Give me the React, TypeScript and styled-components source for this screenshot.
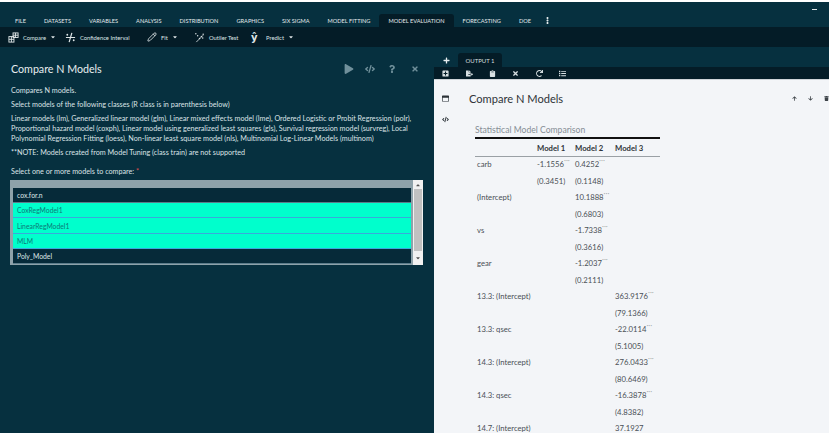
import React from 'react';
import styled, { createGlobalStyle } from 'styled-components';
import { FaPlay, FaCode, FaQuestion, FaTimes, FaPlus, FaFileExport, FaClipboard, FaRedo, FaList, FaEllipsisV, FaArrowUp, FaArrowDown, FaRegWindowMaximize, FaCaretDown, FaCaretUp, FaPlusSquare, FaTrash } from 'react-icons/fa';
import { Pencil } from 'lucide-react';

const GlobalStyle = createGlobalStyle`
  html, body {
    margin: 0;
    padding: 0;
    background: #ffffff;
    font-family: "Lato", "Open Sans", sans-serif;
  }
`;

const Page = styled.div`
  width: 829px;
  height: 435px;
  display: flex;
  flex-direction: column;
  overflow: hidden;
  background: #06303f;
  border-top: 2px solid #ffffff;
  border-bottom: 2px solid #ffffff;
  box-sizing: border-box;
`;

const TabBar = styled.div`
  height: 25px;
  flex: none;
  display: flex;
  align-items: flex-end;
  padding-left: 6px;
  position: relative;
`;

const Tab = styled.div<{ $active?: boolean }>`
  height: 13px;
  line-height: 13px;
  padding: 0 9px;
  font-size: 5.65px;
  color: #e3eaec;
  background: ${props => (props.$active ? '#041c27' : 'transparent')};
  border-radius: 3px 3px 0 0;
  white-space: nowrap;
`;

const MoreTab = styled.div`
  color: #e3eaec;
  font-size: 7px;
  height: 13px;
  display: flex;
  align-items: center;
  margin-left: 4px;
`;

const Minimize = styled.div`
  position: absolute;
  right: 12px;
  top: 7px;
  width: 5px;
  height: 1px;
  background: #dfe6e8;
`;

const Toolbar = styled.div`
  height: 20px;
  flex: none;
  display: flex;
  align-items: center;
  background: #041c27;
  color: #dfe6e8;
  padding-left: 8px;
`;

const ToolItem = styled.div<{ $width: number }>`
  width: ${props => props.$width}px;
  flex: none;
  display: flex;
  align-items: center;
  gap: 4px;
  font-size: 5.8px;
  white-space: nowrap;
  svg {
    flex: none;
  }
`;

const HatGlyph = styled.span`
  font-size: 10px;
  font-weight: 700;
  line-height: 11px;
  width: 8px;
  margin-right: 3px;
  font-family: "DejaVu Sans", sans-serif;
`;

const Main = styled.div`
  flex: 1;
  min-height: 0;
  display: flex;
`;

const LeftPanel = styled.div`
  width: 434px;
  flex: none;
  padding: 14px 10px 0 11px;
  box-sizing: border-box;
  color: #dbe3e6;
  font-size: 7.2px;
  line-height: 10px;
`;

const PanelHeader = styled.div`
  height: 16px;
  display: flex;
  align-items: center;
  justify-content: space-between;
  margin-bottom: 9px;
`;

const PanelTitle = styled.h1`
  margin: 0;
  font-size: 10.7px;
  font-weight: 400;
  color: #e6edef;
`;

const PanelActions = styled.div`
  display: flex;
  align-items: center;
  gap: 11px;
  margin-right: 5px;
  color: #70909b;
  font-size: 10px;
`;

const HelpIcon = styled(FaQuestion)`
  font-size: 8px;
  margin: 0 2px;
`;

const CloseIcon = styled(FaTimes)`
  font-size: 8px;
  margin-left: 2px;
`;

const Para = styled.p<{ $gap?: number }>`
  margin: 0 0 ${props => props.$gap ?? 4}px;
`;

const Required = styled.span`
  color: #e05050;
`;

const ListBox = styled.div`
  width: 413px;
  height: 85px;
  margin-left: -1px;
  display: flex;
  background: #8ea2aa;
  box-sizing: border-box;
`;

const Rows = styled.div`
  flex: 1;
  padding: 8px 2px 1px 3px;
  display: flex;
  flex-direction: column;
`;

const Row = styled.div<{ $selected?: boolean }>`
  flex: 1;
  display: flex;
  align-items: center;
  padding-left: 4px;
  font-size: 6.8px;
  color: ${props => (props.$selected ? '#0e7a78' : '#dfe6e8')};
  background: ${props => (props.$selected ? '#00ffcc' : '#062a39')};
  border-bottom: 1px solid ${props => (props.$selected ? '#39a9dc' : '#5b7c8a')};
`;

const ScrollBar = styled.div`
  width: 10px;
  flex: none;
  display: flex;
  flex-direction: column;
  align-items: center;
  justify-content: space-between;
  background: #f1f1f1;
  color: #505050;
  font-size: 6px;
`;

const ScrollThumb = styled.div`
  flex: 1;
  width: 8px;
  background: #c1c1c1;
`;

const ScrollArrow = styled.div<{ $height: number }>`
  height: ${props => props.$height}px;
  flex: none;
  display: flex;
  align-items: center;
`;

const RightPanel = styled.div`
  flex: 1;
  min-width: 0;
  display: flex;
  flex-direction: column;
`;

const OutputTabs = styled.div`
  height: 14px;
  margin-top: 6px;
  flex: none;
  display: flex;
  align-items: stretch;
  color: #e8eef0;
`;

const AddTab = styled.div`
  width: 24px;
  display: flex;
  align-items: center;
  justify-content: center;
  font-size: 7px;
`;

const OutputTab = styled.div`
  width: 44px;
  background: #041c27;
  border-radius: 3px 3px 0 0;
  font-size: 6px;
  display: flex;
  align-items: center;
  justify-content: center;
  color: #d3dcdf;
`;

const OutputToolbar = styled.div`
  height: 12px;
  flex: none;
  background: #041c27;
  color: #d8e0e3;
  display: flex;
  align-items: center;
  font-size: 7px;
`;

const OutputTool = styled.div`
  width: 23.4px;
  flex: none;
  display: flex;
  align-items: center;
  justify-content: center;
`;

const OutputBody = styled.div`
  flex: 1;
  min-height: 0;
  display: flex;
  background: #f3f5f8;
  overflow: hidden;
  border-top: 1px solid #cfd4d8;
`;

const SideRail = styled.div`
  width: 35px;
  flex: none;
  padding: 15px 0 0 8px;
  display: flex;
  flex-direction: column;
  align-items: flex-start;
  gap: 14px;
  color: #2c3338;
  font-size: 7px;
  box-sizing: border-box;
`;

const OutputContent = styled.div`
  flex: 1;
  min-width: 0;
`;

const OutputHeader = styled.div`
  height: 18px;
  margin-top: 9px;
  display: flex;
  align-items: center;
  justify-content: space-between;
`;

const OutputTitle = styled.h2`
  margin: 0;
  font-size: 11.1px;
  font-weight: 400;
  color: #2f3438;
`;

const OutputActions = styled.div`
  display: flex;
  gap: 11px;
  font-size: 5px;
  color: #3c4247;
  width: 37px;
  flex: none;
`;

const ModelTable = styled.table`
  margin: 17px 0 0 6px;
  width: 185px;
  border-collapse: collapse;
  table-layout: fixed;
  font-size: 7.7px;
  color: #4a5056;
  caption-side: top;
`;

const Caption = styled.caption`
  text-align: left;
  font-size: 8.6px;
  color: #868e96;
  height: 13px;
  line-height: 12px;
  padding: 0;
`;

const HeadCell = styled.th`
  height: 17px;
  padding: 0 0 0 2px;
  text-align: left;
  font-weight: 700;
  color: #2f3438;
  border-top: 2px solid #111111;
  border-bottom: 1px solid #9aa0a5;
`;

const Cell = styled.td`
  height: 16.5px;
  box-sizing: border-box;
  padding: 0 0 1.5px 2px;
  white-space: nowrap;
`;

const Stars = styled.sup`
  font-size: 4.5px;
  line-height: 0;
`;

const CompareIcon = () => (
  <svg width="11" height="11" viewBox="0 0 12 12" fill="none" stroke="currentColor" strokeWidth="1">
    <rect x="5.5" y="1" width="5.5" height="5" />
    <rect x="1" y="5" width="5.5" height="6" />
    <path d="M5.5 3.5h5.500M8.200 1v5M1 8h5.500M3.700 5v6" />
  </svg>
);

const IntervalIcon = () => (
  <svg width="11" height="11" viewBox="0 0 12 12" fill="none" stroke="currentColor" strokeWidth="1.300">
    <path d="M7.500 1 4.500 11M1 6h10" />
    <circle cx="2.500" cy="3" r="1" fill="currentColor" stroke="none" />
    <circle cx="9.500" cy="9" r="1" fill="currentColor" stroke="none" />
  </svg>
);

const OutlierIcon = () => (
  <svg width="11" height="11" viewBox="0 0 12 12" fill="currentColor">
    <circle cx="2" cy="2" r="0.8" />
    <circle cx="4" cy="4" r="0.8" />
    <circle cx="10" cy="2.500" r="0.8" />
    <circle cx="8" cy="5" r="0.8" />
    <circle cx="6" cy="7" r="0.8" />
    <circle cx="9.500" cy="6.500" r="0.8" />
    <path d="M2.500 11 10 3.500" stroke="currentColor" strokeWidth="0.9" fill="none" />
  </svg>
);

const tabs = ['FILE', 'DATASETS', 'VARIABLES', 'ANALYSIS', 'DISTRIBUTION', 'GRAPHICS', 'SIX SIGMA', 'MODEL FITTING', 'MODEL EVALUATION', 'FORECASTING', 'DOE'];

const models = [
  { name: 'cox.for.n' },
  { name: 'CoxRegModel1', selected: true },
  { name: 'LinearRegModel1', selected: true },
  { name: 'MLM', selected: true },
  { name: 'Poly_Model' },
];

type Coef = { label?: string; m1?: string; m2?: string; m3?: string; stars?: boolean };

const rows: Coef[] = [
  { label: 'carb', m1: '-1.1556', m2: '0.4252', stars: true },
  { m1: '(0.3451)', m2: '(0.1148)' },
  { label: '(Intercept)', m2: '10.1888', stars: true },
  { m2: '(0.6803)' },
  { label: 'vs', m2: '-1.7338', stars: true },
  { m2: '(0.3616)' },
  { label: 'gear', m2: '-1.2037', stars: true },
  { m2: '(0.2111)' },
  { label: '13.3: (Intercept)', m3: '363.9176', stars: true },
  { m3: '(79.1366)' },
  { label: '13.3: qsec', m3: '-22.0114', stars: true },
  { m3: '(5.1005)' },
  { label: '14.3: (Intercept)', m3: '276.0433', stars: true },
  { m3: '(80.6469)' },
  { label: '14.3: qsec', m3: '-16.3878', stars: true },
  { m3: '(4.8382)' },
  { label: '14.7: (Intercept)', m3: '37.1927' },
];

const Value = ({ text, stars }: { text?: string; stars?: boolean }) => (
  <Cell>
    {text}
    {text && stars ? <Stars>***</Stars> : null}
  </Cell>
);

const App = () => {
  return <Page>
    <GlobalStyle />
    <TabBar>
      {tabs.map(tab => <Tab key={tab} $active={tab === 'MODEL EVALUATION'}>{tab}</Tab>)}
      <MoreTab><FaEllipsisV /></MoreTab>
      <Minimize />
    </TabBar>
    <Toolbar>
      <ToolItem $width={57}><CompareIcon />Compare <FaCaretDown size={6} /></ToolItem>
      <ToolItem $width={82}><IntervalIcon />Confidence Interval</ToolItem>
      <ToolItem $width={47}><Pencil size={10} />Fit <FaCaretDown size={6} /></ToolItem>
      <ToolItem $width={57}><OutlierIcon />Outlier Test</ToolItem>
      <ToolItem $width={50}><HatGlyph>ŷ</HatGlyph>Predict <FaCaretDown size={6} /></ToolItem>
    </Toolbar>
    <Main>
      <LeftPanel>
        <PanelHeader>
          <PanelTitle>Compare N Models</PanelTitle>
          <PanelActions><FaPlay /><FaCode /><HelpIcon /><CloseIcon /></PanelActions>
        </PanelHeader>
        <Para>Compares N models.</Para>
        <Para>Select models of the following classes (R class is in parenthesis below)</Para>
        <Para>Linear models (lm), Generalized linear model (glm), Linear mixed effects model (lme), Ordered Logistic or Probit Regression (polr), Proportional hazard model (coxph), Linear model using generalized least squares (gls), Survival regression model (survreg), Local Polynomial Regression Fitting (loess), Non-linear least square model (nls), Multinomial Log-Linear Models (multinom)</Para>
        <Para $gap={8.5}>**NOTE: Models created from Model Tuning (class train) are not supported</Para>
        <Para $gap={3.5}>Select one or more models to compare: <Required>*</Required></Para>
        <ListBox>
          <Rows>
            {models.map(model => <Row key={model.name} $selected={model.selected}>{model.name}</Row>)}
          </Rows>
          <ScrollBar>
            <ScrollArrow $height={9}><FaCaretUp /></ScrollArrow>
            <ScrollThumb />
            <ScrollArrow $height={14}><FaCaretDown /></ScrollArrow>
          </ScrollBar>
        </ListBox>
      </LeftPanel>
      <RightPanel>
        <OutputTabs>
          <AddTab><FaPlus /></AddTab>
          <OutputTab>OUTPUT 1</OutputTab>
        </OutputTabs>
        <OutputToolbar>
          <OutputTool><FaPlusSquare /></OutputTool>
          <OutputTool><FaFileExport /></OutputTool>
          <OutputTool><FaClipboard /></OutputTool>
          <OutputTool><FaTimes /></OutputTool>
          <OutputTool><FaRedo /></OutputTool>
          <OutputTool><FaList /></OutputTool>
        </OutputToolbar>
        <OutputBody>
          <SideRail>
            <FaRegWindowMaximize />
            <FaCode />
          </SideRail>
          <OutputContent>
            <OutputHeader>
              <OutputTitle>Compare N Models</OutputTitle>
              <OutputActions><FaArrowUp /><FaArrowDown /><FaTrash /></OutputActions>
            </OutputHeader>
            <ModelTable>
              <Caption>Statistical Model Comparison</Caption>
              <colgroup>
                <col style={{ width: 60 }} />
                <col style={{ width: 38 }} />
                <col style={{ width: 40 }} />
                <col />
              </colgroup>
              <thead>
                <tr>
                  <HeadCell />
                  <HeadCell>Model 1</HeadCell>
                  <HeadCell>Model 2</HeadCell>
                  <HeadCell>Model 3</HeadCell>
                </tr>
              </thead>
              <tbody>
                {rows.map((row, i) => <tr key={i}>
                  <Cell>{row.label}</Cell>
                  <Value text={row.m1} stars={row.stars} />
                  <Value text={row.m2} stars={row.stars} />
                  <Value text={row.m3} stars={row.stars} />
                </tr>)}
              </tbody>
            </ModelTable>
          </OutputContent>
        </OutputBody>
      </RightPanel>
    </Main>
  </Page>;
};

export default App;
